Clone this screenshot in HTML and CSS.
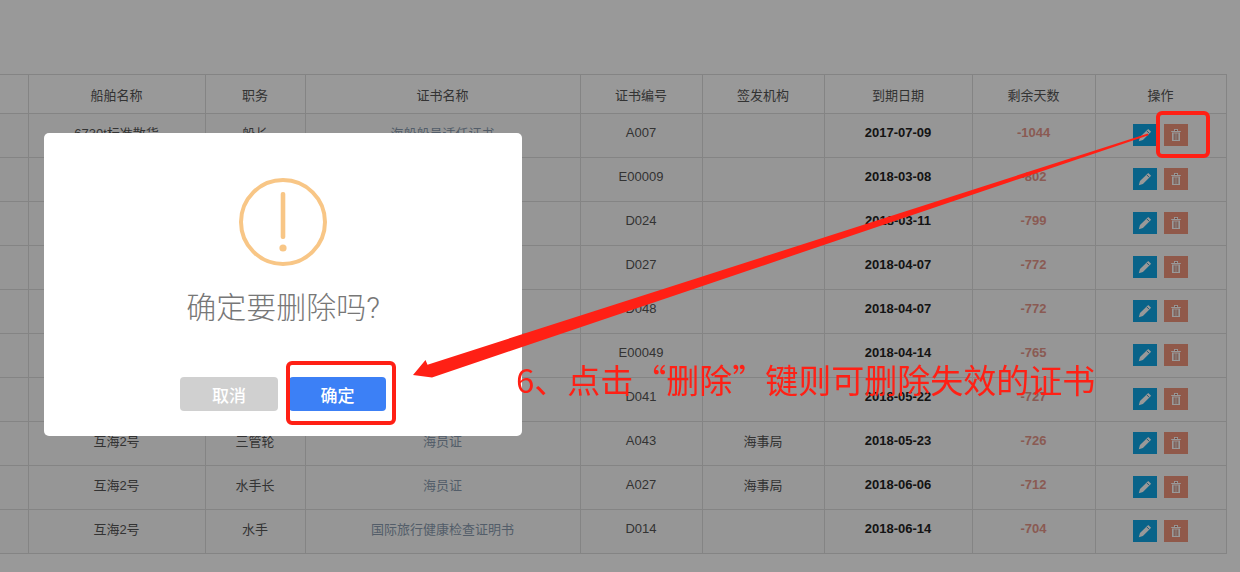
FILE: index.html
```html
<!DOCTYPE html>
<html lang="zh-CN">
<head>
    <meta charset="UTF-8">
    <title>证书管理</title>
    <link rel="stylesheet" href="styles.css">
</head>
<body>
    <svg width="0" height="0" class="defs">
        <symbol id="pencil" viewBox="0 0 14 14">
            <path d="M10.2 0.9 L13.1 3.8 L4.9 12 L0.8 13.2 L2 9.1 Z" fill="#fff"/>
            <path d="M8.8 2.9 L11.1 5.2" stroke="#0b78ae" stroke-width="0.8"/>
        </symbol>
        <symbol id="trash" viewBox="0 0 14 14">
            <path d="M2.2 3 H11.8 V4 H2.2 Z M5 1 H9 V3 H5 Z M3 4.4 H11 V13 H3 Z" fill="#fff"/>
            <path d="M5.2 5.4 V12 M7 5.4 V12 M8.8 5.4 V12" stroke="#c0705a" stroke-width="0.9"/>
            <path d="M5.9 1.9 H8.1 V3 H5.9 Z" fill="#c0705a"/>
        </symbol>
    </svg>

    <table class="cert-table">
        <colgroup>
            <col class="c-first"><col class="c-ship"><col class="c-job"><col class="c-cert">
            <col class="c-no"><col class="c-org"><col class="c-date"><col class="c-days"><col class="c-op">
        </colgroup>
        <thead>
            <tr><th></th><th>船舶名称</th><th>职务</th><th>证书名称</th><th>证书编号</th><th>签发机构</th><th>到期日期</th><th>剩余天数</th><th>操作</th></tr>
        </thead>
        <tbody>
            <tr><td></td><td>6730t标准散货</td><td>船长</td><td class="link">海船船员适任证书</td><td>A007</td><td></td><td class="date">2017-07-09</td><td class="days">-1044</td>
                <td class="ops"><span class="btn-edit"><svg class="ico"><use href="#pencil"/></svg></span><span class="btn-del"><svg class="ico"><use href="#trash"/></svg></span></td></tr>
            <tr><td></td><td></td><td></td><td class="link"></td><td>E00009</td><td></td><td class="date">2018-03-08</td><td class="days">-802</td>
                <td class="ops"><span class="btn-edit"><svg class="ico"><use href="#pencil"/></svg></span><span class="btn-del"><svg class="ico"><use href="#trash"/></svg></span></td></tr>
            <tr><td></td><td></td><td></td><td class="link"></td><td>D024</td><td></td><td class="date">2018-03-11</td><td class="days">-799</td>
                <td class="ops"><span class="btn-edit"><svg class="ico"><use href="#pencil"/></svg></span><span class="btn-del"><svg class="ico"><use href="#trash"/></svg></span></td></tr>
            <tr><td></td><td></td><td></td><td class="link"></td><td>D027</td><td></td><td class="date">2018-04-07</td><td class="days">-772</td>
                <td class="ops"><span class="btn-edit"><svg class="ico"><use href="#pencil"/></svg></span><span class="btn-del"><svg class="ico"><use href="#trash"/></svg></span></td></tr>
            <tr><td></td><td></td><td></td><td class="link"></td><td>D048</td><td></td><td class="date">2018-04-07</td><td class="days">-772</td>
                <td class="ops"><span class="btn-edit"><svg class="ico"><use href="#pencil"/></svg></span><span class="btn-del"><svg class="ico"><use href="#trash"/></svg></span></td></tr>
            <tr><td></td><td></td><td></td><td class="link"></td><td>E00049</td><td></td><td class="date">2018-04-14</td><td class="days">-765</td>
                <td class="ops"><span class="btn-edit"><svg class="ico"><use href="#pencil"/></svg></span><span class="btn-del"><svg class="ico"><use href="#trash"/></svg></span></td></tr>
            <tr><td></td><td></td><td></td><td class="link"></td><td>D041</td><td></td><td class="date">2018-05-22</td><td class="days">-727</td>
                <td class="ops"><span class="btn-edit"><svg class="ico"><use href="#pencil"/></svg></span><span class="btn-del"><svg class="ico"><use href="#trash"/></svg></span></td></tr>
            <tr><td></td><td>互海2号</td><td>三管轮</td><td class="link">海员证</td><td>A043</td><td>海事局</td><td class="date">2018-05-23</td><td class="days">-726</td>
                <td class="ops"><span class="btn-edit"><svg class="ico"><use href="#pencil"/></svg></span><span class="btn-del"><svg class="ico"><use href="#trash"/></svg></span></td></tr>
            <tr><td></td><td>互海2号</td><td>水手长</td><td class="link">海员证</td><td>A027</td><td>海事局</td><td class="date">2018-06-06</td><td class="days">-712</td>
                <td class="ops"><span class="btn-edit"><svg class="ico"><use href="#pencil"/></svg></span><span class="btn-del"><svg class="ico"><use href="#trash"/></svg></span></td></tr>
            <tr><td></td><td>互海2号</td><td>水手</td><td class="link">国际旅行健康检查证明书</td><td>D014</td><td></td><td class="date">2018-06-14</td><td class="days">-704</td>
                <td class="ops"><span class="btn-edit"><svg class="ico"><use href="#pencil"/></svg></span><span class="btn-del"><svg class="ico"><use href="#trash"/></svg></span></td></tr>
        </tbody>
    </table>

    <div class="overlay"></div>

    <div class="modal">
        <svg class="warn-icon" width="88" height="88" viewBox="0 0 88 88">
            <circle cx="44" cy="44" r="42" fill="none" stroke="#f8c686" stroke-width="4"/>
            <rect x="41.7" y="14" width="4.6" height="47" rx="2" fill="#f8c686"/>
            <circle cx="44" cy="70" r="3.6" fill="#f8c686"/>
        </svg>
        <h2 class="modal-title">确定要删除吗?</h2>
        <div class="modal-btns">
            <button class="btn btn-cancel">取消</button>
            <button class="btn btn-ok">确定</button>
        </div>
    </div>

    <svg class="marks" width="1240" height="572" viewBox="0 0 1240 572">
        <rect x="1158" y="113" width="50" height="43" rx="4" class="mark-box"/>
        <rect x="288" y="363" width="106" height="60" rx="4" class="mark-box"/>
        <polygon class="mark-arrow" points="413,375 425.5,360 427.5,364.7 1148,133.5 1148.5,135.2 432,377.5"/>
    </svg>
    <div class="note">6、点击“删除”键则可删除失效的证书</div>
</body>
</html>
```

FILE: styles.css
```css
html, body {
    margin: 0;
    height: 100%;
    overflow: hidden;
}
body {
    background: #fff;
    font-family: "Liberation Sans", "Noto Sans CJK SC", sans-serif;
    font-size: 13px;
    color: #555;
}
.defs {
    position: absolute;
}
.cert-table {
    margin-top: 74px;
    width: 1226px;
    table-layout: fixed;
    border-collapse: collapse;
    text-align: center;
}
.c-first { width: 28px; }
.c-ship { width: 177px; }
.c-job { width: 100px; }
.c-cert { width: 275px; }
.c-no { width: 122px; }
.c-org { width: 122px; }
.c-date { width: 148px; }
.c-days { width: 123px; }
.c-op { width: 131px; }
.cert-table th, .cert-table td {
    border: 1px solid #ddd;
    padding: 0;
}
.cert-table th:first-child, .cert-table td:first-child {
    border-left: none;
}
.cert-table th {
    height: 38px;
    font-weight: normal;
}
.cert-table td {
    height: 43px;
    padding-bottom: 6px;
    box-sizing: border-box;
    vertical-align: middle;
    background: #fbfbfb;
}
.cert-table tbody tr {
    height: 44px;
}
.cert-table .link {
    color: #8a9bb0;
}
.cert-table .date {
    font-weight: bold;
    color: #222;
}
.cert-table .days {
    font-weight: bold;
    color: #e6978a;
}
.cert-table .ops {
    padding: 0 0 2px;
}
.btn-edit, .btn-del {
    display: inline-flex;
    align-items: center;
    justify-content: center;
    width: 24px;
    height: 22px;
    vertical-align: middle;
}
.btn-edit {
    background: #10a6e4;
}
.btn-del {
    margin-left: 7px;
    background: #f0957c;
}
.ico {
    width: 14px;
    height: 14px;
}
.overlay {
    position: fixed;
    inset: 0;
    background: rgba(0, 0, 0, 0.4);
}
.modal {
    position: absolute;
    left: 44px;
    top: 133px;
    width: 478px;
    height: 303px;
    box-sizing: border-box;
    padding-top: 45px;
    background: #fff;
    border-radius: 5px;
    display: flex;
    flex-direction: column;
    align-items: center;
}
.warn-icon {
    display: block;
}
.modal-title {
    margin: 22px 0 0;
    font-family: Roboto, "Noto Sans CJK SC", sans-serif;
    font-size: 30px;
    line-height: 40px;
    font-weight: 300;
    color: #777;
}
.modal-btns {
    display: flex;
    gap: 11px;
    margin-top: 49px;
}
.btn {
    width: 98px;
    height: 34px;
    padding: 0;
    border: none;
    border-radius: 4px;
    color: #fff;
    font-family: inherit;
    font-size: 17px;
    font-weight: 500;
}
.btn-cancel {
    background: #d0d0d0;
}
.btn-ok {
    width: 97px;
    background: #3c80f6;
}
.marks {
    position: absolute;
    left: 0;
    top: 0;
}
.mark-box {
    fill: none;
    stroke: #ff2015;
    stroke-width: 4;
}
.mark-arrow {
    fill: #ff2015;
}
.note {
    position: absolute;
    left: 516px;
    top: 357px;
    font-family: "Noto Sans CJK SC", sans-serif;
    font-size: 33px;
    line-height: 44px;
    color: #ff2015;
    white-space: nowrap;
}
```
